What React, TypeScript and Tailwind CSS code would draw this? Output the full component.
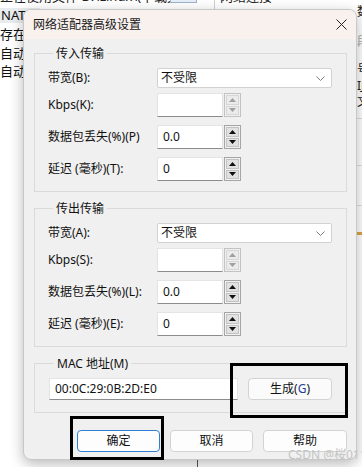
import React from "react";

const FONT = "font-['Noto_Sans','Noto_Sans_CJK_SC',sans-serif]";

function Spin({ disabled }: { disabled?: boolean }) {
  const c = disabled ? "#a0a0a0" : "#111";
  const btn = disabled
    ? "flex flex-1 items-center justify-center border border-[#d6d6d6] bg-[#ebebeb]"
    : "flex flex-1 items-center justify-center border border-[#c4c4c4] bg-[#e1e1e1]";
  return (
    <div
      className={
        "ml-[1px] flex h-[24px] w-[17px] flex-col gap-[1px] border bg-[#f0f0f0] p-[1px] " +
        (disabled ? "border-[#c2c2c2]" : "border-[#a6a6a6]")
      }
    >
      <div className={btn}>
        <svg width="7" height="4" viewBox="0 0 7 4">
          <path d="M3.5 0L7 4H0z" fill={c} />
        </svg>
      </div>
      <div className={btn}>
        <svg width="7" height="4" viewBox="0 0 7 4">
          <path d="M0 0H7L3.5 4z" fill={c} />
        </svg>
      </div>
    </div>
  );
}

function NumRow({ label, value, disabled }: { label: string; value: string; disabled?: boolean }) {
  return (
    <div className="flex h-[24px] items-center">
      <div className="w-[109px] text-[12px] text-[#111]">{label}</div>
      <div className="flex h-[24px] w-[66px] items-center border border-[#e4e4e4] border-b-[#8c8c8c] bg-white px-[5px] text-[12px] text-[#111]">
        {value}
      </div>
      <Spin disabled={disabled} />
    </div>
  );
}

function SelRow({ label }: { label: string }) {
  return (
    <div className="flex h-[20px] items-center">
      <div className="w-[109px] text-[12px] text-[#111]">{label}</div>
      <div className="flex h-[20px] flex-1 items-center justify-between rounded-[2px] border border-[#d2d2d2] bg-white pl-[3px] pr-[6px] text-[12px] text-[#111]">
        <span>不受限</span>
        <svg width="9" height="5" viewBox="0 0 9 5">
          <path d="M0.5 0.5L4.5 4.5L8.5 0.5" fill="none" stroke="#7a7a7a" strokeWidth="1" />
        </svg>
      </div>
    </div>
  );
}

function Group({
  title,
  rows,
}: {
  title: string;
  rows: { sel: string; k: string; kd: boolean; p: string; t: string };
}) {
  return (
    <fieldset className="border border-[#dadada] pl-[13px] pr-[14px] pt-[7px] pb-[10px]">
      <legend className="ml-[5px] px-[3px] text-[12px] leading-[16px] text-[#111]">
        <span className="relative top-[1px]">{title}</span>
      </legend>
      <div className="flex flex-col">
        <SelRow label={rows.sel} />
        <div className="mt-[5px] flex flex-col gap-[8px]">
          <NumRow label={rows.k} value="" disabled={rows.kd} />
          <NumRow label={rows.p} value="0.0" />
          <NumRow label={rows.t} value="0" />
        </div>
      </div>
    </fieldset>
  );
}

export default function App() {
  return (
    <div className={"relative h-[467px] w-[362px] overflow-hidden bg-white " + FONT}>
      {/* background window */}
      <div className="absolute left-0 top-[-13px] whitespace-nowrap text-[13px] text-[#222]">
        正在使用文件 D:\Linux\(下载文件)
      </div>
      <div className="absolute left-[170px] top-[-10px] h-[13px] w-[27px] border border-[#9fb3cc] bg-[#e6eef8]" />
      <div className="absolute left-[214px] top-0 h-[9px] w-px bg-[#cfcfcf]" />
      <div className="absolute left-[220px] top-[-13px] whitespace-nowrap text-[13px] text-[#222]">
        网络连接
      </div>
      <div className="absolute left-0 top-[8px] flex h-[15px] w-[40px] items-center bg-[#e9ecef] pl-[1px] text-[13px] text-[#111]">
        NAT
      </div>
      <div className="absolute left-0 top-[25px] flex flex-col text-[13px] leading-[18.5px] text-[#111]">
        <span>存在</span>
        <span>自动</span>
        <span>自动</span>
      </div>
      <div className="absolute left-[357px] top-[4px] flex flex-col text-[12px] leading-[16px] text-[#222]">
        <span>数</span>
        <span className="mt-[14px] text-[#aaa]">段</span>
        <span className="mt-[12px]">号</span>
        <span>IJ</span>
        <span>文</span>
      </div>
      <div className="absolute left-[357px] top-[118px] h-px w-[5px] bg-[#ddd]" />
      <div className="absolute left-[357px] top-[165px] h-px w-[5px] bg-[#ddd]" />
      <div className="absolute left-[357px] top-[205px] h-px w-[5px] bg-[#ddd]" />
      <div className="absolute left-[357px] top-[232px] h-[3px] w-[5px] bg-[#d9a441]" />
      <div className="absolute left-[197px] top-[455px] h-[12px] w-px bg-[#555]" />

      {/* dialog */}
      <div className="absolute left-[23px] top-[9px] flex h-[451px] w-[334px] flex-col overflow-hidden rounded-[8px] border border-[#c8c8c8] bg-[#f0f0f0] shadow-[0_4px_14px_rgba(0,0,0,0.28)]">
        <div className="flex h-[29px] shrink-0 items-center justify-between bg-[#f9f1ee] pl-[9px] pr-[9px]">
          <span className="text-[12px] text-[#1a1a1a]">网络适配器高级设置</span>
          <svg width="11" height="11" viewBox="0 0 11 11">
            <path d="M0.5 0.5L10.5 10.5M10.5 0.5L0.5 10.5" stroke="#222" strokeWidth="1" />
          </svg>
        </div>
        <div className="flex flex-1 flex-col pl-[10px] pr-[9px] pt-[6px]">
          <Group
            title="传入传输"
            rows={{ sel: "带宽(B):", k: "Kbps(K):", kd: true, p: "数据包丢失(%)(P)", t: "延迟 (毫秒)(T):" }}
          />
          <div className="mt-[8px]">
            <Group
              title="传出传输"
              rows={{ sel: "带宽(A):", k: "Kbps(S):", kd: true, p: "数据包丢失(%)(L):", t: "延迟 (毫秒)(E):" }}
            />
          </div>
          <fieldset className="mt-[8px] border border-[#dadada] pl-[14px] pr-[14px] pt-[7px] pb-[12px]">
            <legend className="ml-[5px] px-[3px] text-[12px] leading-[16px] text-[#111]">
              <span className="relative top-[1px]">MAC 地址(M)</span>
            </legend>
            <div className="flex items-center gap-[10px]">
              <div className="flex h-[22px] w-[189px] items-center border border-[#e4e4e4] border-b-[#8c8c8c] bg-white px-[5px] text-[12px] text-[#111]">
                00:0C:29:0B:2D:E0
              </div>
              <button className="flex h-[22px] flex-1 items-center justify-center rounded-[4px] border border-[#d3d3d3] bg-[#fbfbfb] text-[12px] text-[#111]">
                生成(<span className="text-[#1d3f9e]">G</span>)
              </button>
            </div>
          </fieldset>
          <div className="mt-[17px] flex justify-end gap-[10px]">
            <button className="flex h-[22px] w-[83px] items-center justify-center rounded-[4px] border border-[#2f7fd3] bg-[#fdfdfd] text-[12px] text-[#111]">
              确定
            </button>
            <button className="flex h-[22px] w-[83px] items-center justify-center rounded-[4px] border border-[#d3d3d3] bg-[#fdfdfd] text-[12px] text-[#111]">
              取消
            </button>
            <button className="flex h-[22px] w-[84px] items-center justify-center rounded-[4px] border border-[#d3d3d3] bg-[#fdfdfd] text-[12px] text-[#111]">
              帮助
            </button>
          </div>
        </div>
      </div>

      {/* annotation boxes */}
      <div className="pointer-events-none absolute left-[230px] top-[363px] h-[55px] w-[118px] border-[3px] border-black" />
      <div className="pointer-events-none absolute left-[70px] top-[416px] h-[44px] w-[94px] border-[3px] border-black" />

      {/* watermark */}
      <div className="pointer-events-none absolute left-[288px] top-[447px] whitespace-nowrap text-[12px] leading-[16px] text-[#c4c4c4]">
        CSDN @桜0119
      </div>
    </div>
  );
}
